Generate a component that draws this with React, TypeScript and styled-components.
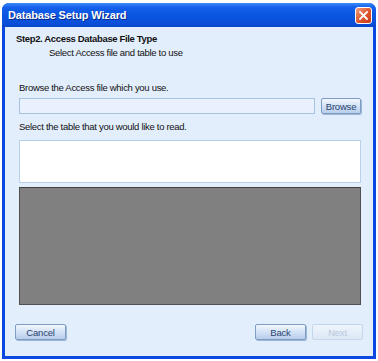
import React from "react";
import styled, { createGlobalStyle } from "styled-components";

const Global = createGlobalStyle`
  html, body { margin: 0; padding: 0; background: #ffffff; }
  body { font-family: "Liberation Sans", Arial, sans-serif; }
`;

const Page = styled.div`
  padding: 3px 2px 2px 2px;
  width: 378px;
  height: 361px;
  box-sizing: border-box;
`;

const Window = styled.div`
  width: 374px;
  height: 356px;
  display: flex;
  flex-direction: column;
  border-radius: 7px 7px 0 0;
  background: #0a48e0;
  box-sizing: border-box;
  overflow: hidden;
`;

const TitleBar = styled.div`
  height: 24px;
  flex: none;
  display: flex;
  align-items: center;
  justify-content: space-between;
  padding: 0 4px 0 6px;
  background: linear-gradient(#3a8cf8 0%, #1560ea 18%, #0a55e2 50%, #0a4fd8 85%, #0a46cc 100%);
`;

const TitleText = styled.span`
  color: #ffffff;
  font-family: "Liberation Sans", Arial, sans-serif;
  font-weight: bold;
  font-size: 11px;
  letter-spacing: -0.15px;
  text-shadow: 1px 1px 0 #0a2a8a;
`;

const CloseBtn = styled.div`
  width: 17px;
  height: 17px;
  border: 1px solid #ffffff;
  border-radius: 3px;
  background: linear-gradient(135deg, #f0a080 0%, #e05a30 50%, #c83a18 100%);
  display: flex;
  align-items: center;
  justify-content: center;
  box-sizing: border-box;
`;

const Body = styled.div`
  flex: 1;
  margin: 0 3px 3px 3px;
  background: #e3eefc;
  display: flex;
  flex-direction: column;
  padding: 0 10px 0 10px;
  font-size: 9.5px;
  letter-spacing: -0.3px;
  color: #111111;
`;

const Header = styled.div`
  padding: 5px 0 0 1px;
  height: 34px;
`;

const StepTitle = styled.div`
  font-weight: bold;
  font-size: 9.5px;
  letter-spacing: -0.35px;
  line-height: 14px;
`;

const StepSub = styled.div`
  padding-left: 33px;
  line-height: 14px;
`;

const Section = styled.div`
  padding: 0 2px 0 4px;
  display: flex;
  flex-direction: column;
`;

const Label = styled.div<{ $top: number }>`
  margin-top: ${(p) => p.$top}px;
  line-height: 14px;
  height: 14px;
`;

const Row = styled.div`
  margin-top: 3px;
  display: flex;
  gap: 6px;
  height: 16px;
`;

const Input = styled.div`
  flex: 1;
  height: 16px;
  box-sizing: border-box;
  border: 1px solid #a6c3e2;
  background: #e8f1fd;
`;

const Btn = styled.div<{ $disabled?: boolean; $w: number }>`
  width: ${(p) => p.$w}px;
  height: 16px;
  box-sizing: border-box;
  border: 1px solid ${(p) => (p.$disabled ? "#c6d6ea" : "#7f9dc4")};
  border-radius: 2px;
  background: ${(p) =>
    p.$disabled
      ? "linear-gradient(#eef4fc, #dde8f6)"
      : "linear-gradient(#f2f7fe 0%, #d6e4f6 45%, #b8cdea 100%)"};
  color: ${(p) => (p.$disabled ? "#b8c8dc" : "#2a4470")};
  font-size: 9.5px;
  letter-spacing: -0.2px;
  display: flex;
  align-items: center;
  justify-content: center;
  box-shadow: ${(p) => (p.$disabled ? "none" : "1px 1px 0 #9fb7d6")};
`;

const ListBox = styled.div`
  margin-top: 6px;
  height: 43px;
  box-sizing: border-box;
  border: 1px solid #b8d0ea;
  background: #ffffff;
`;

const GrayBox = styled.div`
  margin-top: 4px;
  height: 118px;
  box-sizing: border-box;
  border: 1px solid #505050;
  border-top-color: #404040;
  background: #808080;
`;

const Footer = styled.div`
  margin-top: 19px;
  display: flex;
  align-items: center;
  gap: 6px;
  padding-right: 0px;
`;

const Spacer = styled.div`
  flex: 1;
`;

export default function App() {
  return (
    <>
      <Global />
      <Page>
        <Window>
          <TitleBar>
            <TitleText>Database Setup Wizard</TitleText>
            <CloseBtn>
              <svg width="9" height="9" viewBox="0 0 9 9">
                <path d="M1 1 L8 8 M8 1 L1 8" stroke="#ffffff" strokeWidth="1.8" strokeLinecap="square" />
              </svg>
            </CloseBtn>
          </TitleBar>
          <Body>
            <Header>
              <StepTitle>Step2. Access Database File Type</StepTitle>
              <StepSub>Select Access file and table to use</StepSub>
            </Header>
            <Section>
              <Label $top={15}>Browse the Access file which you use.</Label>
              <Row>
                <Input />
                <Btn $w={40}>Browse</Btn>
              </Row>
              <Label $top={6}>Select the table that you would like to read.</Label>
              <ListBox />
              <GrayBox />
            </Section>
            <Footer>
              <Btn $w={51}>Cancel</Btn>
              <Spacer />
              <Btn $w={51}>Back</Btn>
              <Btn $w={51} $disabled>Next</Btn>
            </Footer>
          </Body>
        </Window>
      </Page>
    </>
  );
}
